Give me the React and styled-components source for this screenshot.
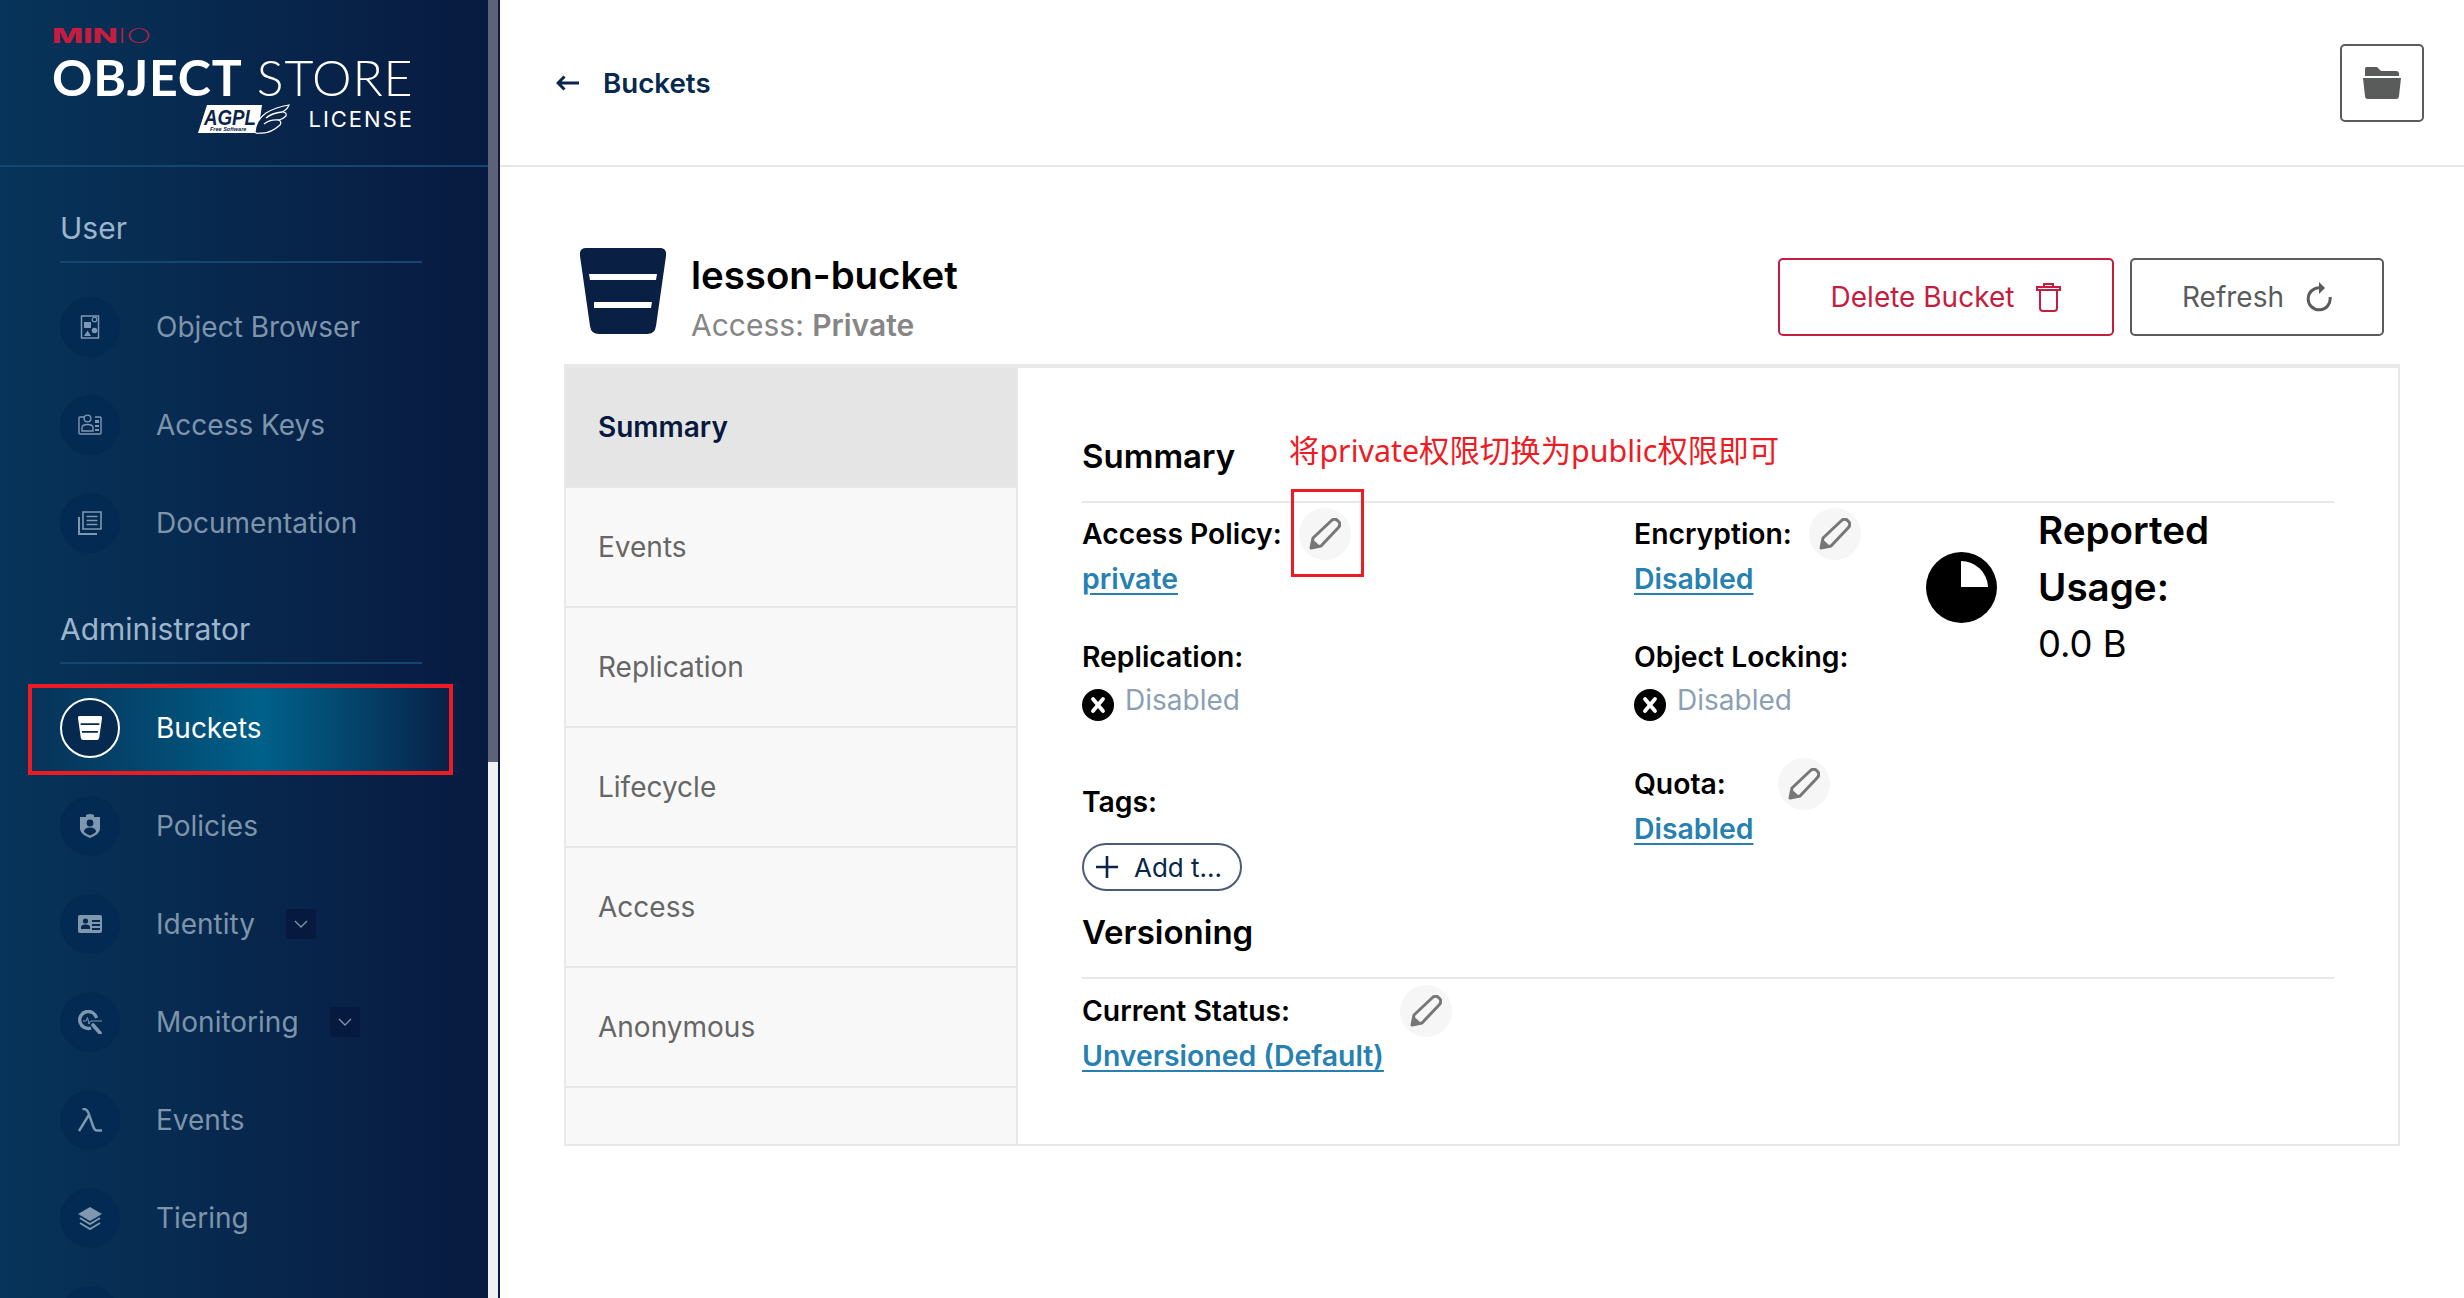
import styled, { createGlobalStyle } from 'styled-components'

const GlobalStyle = createGlobalStyle`
  html, body {
    margin: 0;
    height: 100%;
    overflow: hidden;
    background: #fff;
    font-family: Inter, "Noto Sans", sans-serif;
  }
  * { box-sizing: border-box; }
`

const BucketGlyph = ({ size = 24, color = 'currentColor', stripe = '#fff' }) => (
  <svg width={size} height={size} viewBox="0 0 86 86">
    <path
      d="M6 0H80Q87 0 86 8L76 78Q75 86 67 86H19Q11 86 10 78L0 8Q-1 0 6 0Z"
      fill={color}
    />
    <path d="M9 26H77L76 32H10ZM14 54H72L71 60H14Z" fill={stripe} />
  </svg>
)

const Pencil = () => (
  <svg width="32" height="32" viewBox="0 0 32 32" fill="none">
    <path
      d="M2 30L4 20L22 3Q25 0 28 2L30 4Q32 7 29 10L12 28Z"
      stroke="#777"
      strokeWidth="3"
      strokeLinejoin="round"
    />
    <path d="M2 30L3.5 21L11 28Z" fill="#777" />
  </svg>
)

const XCircle = () => (
  <svg width="32" height="32" viewBox="0 0 32 32">
    <circle cx="16" cy="16" r="16" fill="#000" />
    <path d="M11 10L21 22M21 10L11 22" stroke="#fff" strokeWidth="3.8" strokeLinecap="round" />
  </svg>
)

const UsagePie = () => (
  <svg width="71" height="71" viewBox="0 0 71 71">
    <circle cx="35.5" cy="35.5" r="35.5" fill="#000" />
    <path d="M35 9A27 27 0 0 1 62 35H35Z" fill="#fff" />
  </svg>
)

const icons = {
  browser: (
    <svg viewBox="0 0 24 24" fill="none">
      <path d="M3.5 1H20.5V23H3.5Z" stroke="currentColor" strokeWidth="1.5" />
      <path d="M6 7H13V13H6Z" fill="currentColor" />
      <circle cx="16.5" cy="4.5" r="2.3" stroke="currentColor" strokeWidth="1.2" />
      <circle cx="16.5" cy="15.5" r="2.8" fill="currentColor" />
      <path d="M6 21L9.5 15.5L13 21Z" fill="currentColor" />
    </svg>
  ),
  keys: (
    <svg viewBox="0 0 24 24" fill="none">
      <path d="M6 4H2Q1 4 1 5V20Q1 21 2 21H22Q23 21 23 20V5Q23 4 22 4H17" stroke="currentColor" strokeWidth="1.4" />
      <circle cx="9.5" cy="5.5" r="3.4" stroke="currentColor" strokeWidth="1.4" />
      <path d="M4 18V15Q4 11.5 9.5 11.5Q15 11.5 15 15V18Z" stroke="currentColor" strokeWidth="1.4" />
      <path d="M17 7H21V10H17ZM17 12H21V14H17ZM17 16H21V18H17Z" fill="currentColor" />
    </svg>
  ),
  docs: (
    <svg viewBox="0 0 24 24" fill="none">
      <path d="M5 1H23V18H5Z" stroke="currentColor" strokeWidth="1.6" />
      <path d="M1 6V23H19" stroke="currentColor" strokeWidth="2" />
      <path d="M8.5 5.5H19.5M8.5 9.5H19.5M8.5 13.5H19.5" stroke="currentColor" strokeWidth="1.6" />
    </svg>
  ),
  policies: (
    <svg viewBox="0 0 24 24" fill="none">
      <path
        d="M8 3V1.5Q8 0 12 0Q16 0 16 1.5V3H22V15Q22 20 12 24Q2 20 2 15V3Z"
        fill="currentColor"
      />
      <circle cx="12" cy="9" r="3.4" fill="#06294f" />
      <path d="M6 18Q6 13.5 12 13.5Q18 13.5 18 18Q15 20.5 12 21.5Q9 20.5 6 18Z" fill="#06294f" />
    </svg>
  ),
  identity: (
    <svg viewBox="0 0 24 24">
      <path d="M2 3H22Q24 3 24 5V19Q24 21 22 21H2Q0 21 0 19V5Q0 3 2 3Z" fill="currentColor" />
      <circle cx="7.5" cy="9" r="2.6" fill="#06294f" />
      <path d="M3 17V15Q3 12.5 7.5 12.5Q12 12.5 12 15V17Z" fill="#06294f" />
      <path d="M14 8H22V10H14ZM14 12H22V14H14ZM14 16H22V18H14Z" fill="#06294f" />
    </svg>
  ),
  monitoring: (
    <svg viewBox="0 0 24 24" fill="none">
      <path d="M18.5 8A8.5 8.5 0 1 0 13 18" stroke="currentColor" strokeWidth="3.4" />
      <path d="M15 15L22 23" stroke="currentColor" strokeWidth="3.6" strokeLinecap="round" />
      <path d="M5 11H8L9.5 7.5L11 14L12.5 11H24" stroke="currentColor" strokeWidth="1" />
    </svg>
  ),
  lambda: (
    <svg viewBox="0 0 24 24" fill="none">
      <path d="M1 23L10.5 7.5M4.5 1H6Q9 1 10.5 5L15 18Q16.5 22.5 19 22.5H24" stroke="currentColor" strokeWidth="2.4" />
    </svg>
  ),
  tiering: (
    <svg viewBox="0 0 24 24" fill="none">
      <path d="M12 1L24 8L12 15L0 8Z" fill="currentColor" />
      <path d="M2 12L12 18L22 12M2 17L12 23L22 17" stroke="currentColor" strokeWidth="2" />
    </svg>
  ),
  buckets: <BucketGlyph stripe="#06294f" />,
}

const userLinks = [
  { label: 'Object Browser', icon: 'browser' },
  { label: 'Access Keys', icon: 'keys' },
  { label: 'Documentation', icon: 'docs' },
]

// the last row runs off the bottom of the window, only its circle top shows
const adminLinks = [
  { label: 'Buckets', icon: 'buckets', active: true },
  { label: 'Policies', icon: 'policies' },
  { label: 'Identity', icon: 'identity', expand: true },
  { label: 'Monitoring', icon: 'monitoring', expand: true },
  { label: 'Events', icon: 'lambda' },
  { label: 'Tiering', icon: 'tiering' },
  { label: '', icon: 'tiering' },
]

const tabs = ['Summary', 'Events', 'Replication', 'Lifecycle', 'Access', 'Anonymous']

const NavRow = ({ label, icon, active, expand }) => (
  <NavItem $active={active}>
    <NavIcon $active={active}>{icons[icon]}</NavIcon>
    <NavLabel $active={active}>{label}</NavLabel>
    {expand && (
      <Chevron>
        <svg width="14" height="8" viewBox="0 0 14 8" fill="none">
          <path d="M1 1L7 7L13 1" stroke="currentColor" strokeWidth="1.4" />
        </svg>
      </Chevron>
    )}
  </NavItem>
)

const App = () => {
  return (
    <Page>
      <GlobalStyle />
      <Sidebar>
        <SideNav>
          <Logo>
            <Brand>
              <b>MIN</b>IO
            </Brand>
            <ProductName>
              <b>OBJECT</b> STORE
            </ProductName>
            <LicenseRow>
              <svg width="94" height="30" viewBox="0 0 94 30">
                <path d="M9 1H58L60 29H0Z" fill="#fff" />
                <path d="M58 1H64L60 29H52Z" fill="#fff" />
                <text x="6" y="21" fontFamily="Liberation Sans" fontStyle="italic" fontWeight="700" fontSize="22" textLength="52" lengthAdjust="spacingAndGlyphs" fill="#0a2547">
                  AGPL
                </text>
                <text x="12" y="27" fontFamily="Liberation Sans" fontStyle="italic" fontWeight="700" fontSize="5.5" fill="#0a2547">
                  Free Software
                </text>
                <path d="M57 28Q58 16 68 9Q78 3 91 1Q89 6 84 8Q89 8 88 12Q85 15 81 16Q84 18 82 21Q72 30 62 29Q58 30 57 28Z" fill="#0a2547" stroke="#fff" strokeWidth="1.2" />
                <path d="M68 14Q74 9 84 8M66 20Q72 15 81 16" stroke="#fff" strokeWidth="1.4" fill="none" />
              </svg>
              <License>LICENSE</License>
            </LicenseRow>
          </Logo>
          <SectionTitle $top={41}>User</SectionTitle>
          {userLinks.map((link) => (
            <NavRow key={link.icon} {...link} />
          ))}
          <SectionTitle $top={41}>Administrator</SectionTitle>
          {adminLinks.map((link, index) => (
            <NavRow key={index} {...link} />
          ))}
          <AnnotationBox $left={28} $top={684} $width={425} $height={91} $line={4} />
        </SideNav>
        <ScrollTrack>
          <ScrollThumb />
        </ScrollTrack>
      </Sidebar>

      <Main>
        <TopBar>
          <BackLink>
            <svg width="23" height="16" viewBox="0 0 23 16" fill="none">
              <path d="M23 8H2M8.5 1.5L2 8L8.5 14.5" stroke="#0a2547" strokeWidth="3" />
            </svg>
            Buckets
          </BackLink>
          <FolderButton>
            <svg width="38" height="32" viewBox="0 0 38 32">
              <path d="M3 0H14L18 4H33Q36 4 36 7V9H2V3Q2 0 3 0Z" fill="#5a5b5b" />
              <path d="M0 11H38L36 29Q36 32 33 32H5Q2 32 2 29Z" fill="#5a5b5b" />
            </svg>
          </FolderButton>
        </TopBar>

        <Content>
          <BucketHeader>
            <BucketInfo>
              <BucketGlyph size={86} color="#0a1f44" />
              <div>
                <BucketName>lesson-bucket</BucketName>
                <BucketAccess>
                  Access: <b>Private</b>
                </BucketAccess>
              </div>
            </BucketInfo>
            <Actions>
              <ActionButton $color="#c51d3f" $width={336}>
                Delete Bucket
                <svg width="25" height="30" viewBox="0 0 25 30" fill="none">
                  <path d="M1 5H24V8H1ZM8 5V2H17V5" stroke="#c51d3f" strokeWidth="2" />
                  <path d="M4 8V26Q4 29 7 29H18Q21 29 21 26V8" stroke="#c51d3f" strokeWidth="2" />
                </svg>
              </ActionButton>
              <ActionButton $color="#5a5b5b" $width={254}>
                Refresh
                <svg width="26" height="30" viewBox="0 0 26 30" fill="none">
                  <path d="M15 6A11 11 0 1 0 24 15" stroke="#5a5b5b" strokeWidth="3" />
                  <path d="M13 0L19 6L13 12Z" fill="#5a5b5b" />
                </svg>
              </ActionButton>
            </Actions>
          </BucketHeader>

          <Panel>
            <TabList>
              {tabs.map((tab, index) => (
                <Tab key={tab} $selected={index === 0}>
                  {tab}
                </Tab>
              ))}
            </TabList>
            <TabBody>
              <Annotation>将private权限切换为public权限即可</Annotation>
              <AnnotationBox $left={273} $top={121} $width={73} $height={88} $line={3} />
              <SectionHeading>Summary</SectionHeading>
              <SummaryGrid>
                <Column>
                  <LabelRow $gap={17}>
                    Access Policy:
                    <EditCircle>
                      <Pencil />
                    </EditCircle>
                  </LabelRow>
                  <ValueLink>private</ValueLink>
                  <LabelRow $top={33}>Replication:</LabelRow>
                  <StatusRow>
                    <XCircle />
                    <StatusText>Disabled</StatusText>
                  </StatusRow>
                  <LabelRow $top={59}>Tags:</LabelRow>
                  <AddTag>
                    <svg width="22" height="22" viewBox="0 0 22 22" fill="none">
                      <path d="M11 0V22M0 11H22" stroke="#0a2547" strokeWidth="2.6" />
                    </svg>
                    Add t...
                  </AddTag>
                </Column>
                <Column>
                  <LabelRow $gap={17}>
                    Encryption:
                    <EditCircle>
                      <Pencil />
                    </EditCircle>
                  </LabelRow>
                  <ValueLink>Disabled</ValueLink>
                  <LabelRow $top={33}>Object Locking:</LabelRow>
                  <StatusRow>
                    <XCircle />
                    <StatusText>Disabled</StatusText>
                  </StatusRow>
                  <LabelRow $top={41} $gap={52}>
                    Quota:
                    <EditCircle>
                      <Pencil />
                    </EditCircle>
                  </LabelRow>
                  <ValueLink>Disabled</ValueLink>
                </Column>
                <Usage>
                  <UsagePie />
                  <div>
                    <UsageTitle>Reported Usage:</UsageTitle>
                    <UsageValue>0.0 B</UsageValue>
                  </div>
                </Usage>
              </SummaryGrid>
              <SectionHeading $top={18}>Versioning</SectionHeading>
              <LabelRow $top={9} $gap={110}>
                Current Status:
                <EditCircle>
                  <Pencil />
                </EditCircle>
              </LabelRow>
              <ValueLink>Unversioned (Default)</ValueLink>
            </TabBody>
          </Panel>
        </Content>
      </Main>
    </Page>
  )
}

const Page = styled.div`
  display: flex;
  width: 2464px;
  height: 1298px;
  overflow: hidden;
`

const Sidebar = styled.aside`
  display: flex;
  flex: 0 0 500px;
  height: 100%;
  border-right: 2px solid #081c42;
`

const SideNav = styled.nav`
  position: relative;
  width: 488px;
  height: 100%;
  overflow: hidden;
  background: linear-gradient(90deg, #07345a 0%, #081a40 100%);
`

const ScrollTrack = styled.div`
  width: 10px;
  background: #f1f1f1;
`

const ScrollThumb = styled.div`
  height: 762px;
  background: #5c6278;
`

const Logo = styled.div`
  height: 167px;
  padding: 28px 74px 0 52px;
  border-bottom: 2px solid #15466f;
  color: #fff;
`

const Brand = styled.div`
  width: 88px;
  height: 16px;
  color: #c51d3f;
  font-size: 20px;
  font-weight: 200;
  line-height: 16px;
  white-space: nowrap;
  transform: scaleX(1.65);
  transform-origin: left center;

  b {
    font-weight: 800;
  }
`

const ProductName = styled.div`
  margin-top: 9px;
  font-family: Lato, sans-serif;
  font-size: 50px;
  font-weight: 300;
  letter-spacing: 0.8px;
  line-height: 48px;
  white-space: nowrap;

  b {
    font-weight: 700;
  }
`

const LicenseRow = styled.div`
  display: flex;
  align-items: center;
  justify-content: flex-end;
  gap: 16px;
  margin-top: 3px;
`

const License = styled.span`
  font-size: 22px;
  font-weight: 400;
  letter-spacing: 2px;
`

const SectionTitle = styled.div`
  margin: ${({ $top }) => $top}px 66px 19px 60px;
  padding-bottom: 13px;
  border-bottom: 2px solid #15466f;
  color: #9db5cb;
  font-size: 30px;
  line-height: 40px;
`

const NavItem = styled.div`
  display: flex;
  align-items: center;
  height: 90px;
  margin: 0 23px 8px 28px;
  padding-left: 32px;
  background: ${({ $active }) =>
    $active
      ? 'linear-gradient(90deg, rgba(0, 0, 0, 0) 0%, #00618a 53%, rgba(0, 0, 0, 0) 100%)'
      : 'transparent'};
`

const NavIcon = styled.span`
  display: flex;
  align-items: center;
  justify-content: center;
  flex: 0 0 60px;
  width: 60px;
  height: 60px;
  border: 2px solid ${({ $active }) => ($active ? '#fff' : '#052a50')};
  border-radius: 50%;
  background: ${({ $active }) => ($active ? '#06294f' : '#022a52')};
  color: ${({ $active }) => ($active ? '#fff' : '#8098af')};

  svg {
    width: 24px;
    height: 24px;
  }
`

const NavLabel = styled.span`
  margin-left: 36px;
  color: ${({ $active }) => ($active ? '#fff' : '#7d94ab')};
  font-size: 28px;
  white-space: nowrap;
`

const Chevron = styled.span`
  display: flex;
  align-items: center;
  justify-content: center;
  width: 30px;
  height: 30px;
  margin-left: 31px;
  border-radius: 3px;
  background: #061a40;
  color: #7d94ab;
`

const AnnotationBox = styled.div`
  position: absolute;
  left: ${({ $left }) => $left}px;
  top: ${({ $top }) => $top}px;
  width: ${({ $width }) => $width}px;
  height: ${({ $height }) => $height}px;
  border: ${({ $line }) => $line}px solid #ed1c24;
  pointer-events: none;
`

const Main = styled.main`
  flex: 1;
  min-width: 0;
  background: #fff;
`

const TopBar = styled.header`
  display: flex;
  align-items: center;
  justify-content: space-between;
  height: 167px;
  padding: 0 40px 0 56px;
  border-bottom: 2px solid #e5e5e5;
`

const BackLink = styled.a`
  display: flex;
  align-items: center;
  gap: 24px;
  color: #07284f;
  font-size: 27.7px;
  font-weight: 600;
`

const FolderButton = styled.button`
  display: flex;
  align-items: center;
  justify-content: center;
  width: 84px;
  height: 78px;
  padding: 0;
  border: 2px solid #5a5b5b;
  border-radius: 5px;
  background: #fff;
`

const Content = styled.section`
  padding: 81px 64px 0 64px;
`

const BucketHeader = styled.div`
  display: flex;
  align-items: flex-start;
  justify-content: space-between;
  height: 116px;
  padding: 0 16px;
`

const BucketInfo = styled.div`
  display: flex;
  gap: 25px;
`

const BucketName = styled.div`
  margin-top: 4px;
  color: #000;
  font-size: 38.4px;
  font-weight: 600;
  line-height: 46px;
`

const BucketAccess = styled.div`
  margin-top: 7px;
  color: #868686;
  font-size: 30px;
  line-height: 40px;

  b {
    font-weight: 600;
  }
`

const Actions = styled.div`
  display: flex;
  gap: 16px;
  margin-top: 10px;
`

const ActionButton = styled.button`
  display: flex;
  align-items: center;
  justify-content: center;
  gap: 22px;
  width: ${({ $width }) => $width}px;
  height: 78px;
  padding: 0;
  border: 2px solid ${({ $color }) => $color};
  border-radius: 5px;
  background: #fff;
  color: ${({ $color }) => $color};
  font-family: inherit;
  font-size: 28px;
`

const Panel = styled.div`
  display: flex;
  height: 782px;
  border: 2px solid #e8e8e8;
  border-top-width: 4px;
`

const TabList = styled.div`
  flex: 0 0 452px;
  background: #f8f8f8;
  border-right: 2px solid #e8e8e8;
`

const Tab = styled.div`
  display: flex;
  align-items: center;
  height: 120px;
  padding-left: 32px;
  border-bottom: 2px solid #e8e8e8;
  background: ${({ $selected }) => ($selected ? '#e5e5e5' : 'transparent')};
  color: ${({ $selected }) => ($selected ? '#07193e' : '#666')};
  font-size: 28px;
  font-weight: ${({ $selected }) => ($selected ? 600 : 400)};
`

const TabBody = styled.div`
  position: relative;
  flex: 1;
  padding: 65px 64px 0 64px;
`

const Annotation = styled.span`
  position: absolute;
  left: 271px;
  top: 61px;
  color: #ed1c24;
  font-family: "Noto Sans", "Noto Sans CJK SC", sans-serif;
  font-size: 30.4px;
  line-height: 44px;
  white-space: nowrap;
`

const SectionHeading = styled.h2`
  margin: ${({ $top = 0 }) => $top}px 0 0;
  padding-bottom: 22px;
  border-bottom: 2px solid #e8e8e8;
  color: #000;
  font-size: 33px;
  font-weight: 600;
  line-height: 46px;
`

const SummaryGrid = styled.div`
  display: grid;
  grid-template-columns: 552px 292px 1fr;
  padding-top: 8px;
`

const Column = styled.div`
  display: flex;
  flex-direction: column;
  align-items: flex-start;
`

const LabelRow = styled.div`
  display: flex;
  align-items: center;
  gap: ${({ $gap = 0 }) => $gap}px;
  height: 46px;
  margin-top: ${({ $top = 0 }) => $top}px;
  color: #000;
  font-size: 28.3px;
  font-weight: 600;
`

const EditCircle = styled.span`
  display: flex;
  align-items: center;
  justify-content: center;
  width: 52px;
  height: 52px;
  border-radius: 50%;
  background: #f6f6f6;
`

const ValueLink = styled.a`
  display: block;
  color: #2781b0;
  font-size: 28.4px;
  font-weight: 600;
  line-height: 44px;
  text-decoration: underline;
  text-underline-offset: 4px;
`

const StatusRow = styled.div`
  display: flex;
  align-items: flex-start;
  gap: 11px;
  height: 40px;
  padding-top: 9px;
`

const StatusText = styled.span`
  margin-top: -7px;
  color: #8ba0b4;
  font-size: 28px;
  line-height: 36px;
`

const AddTag = styled.button`
  display: flex;
  align-items: center;
  gap: 16px;
  width: 160px;
  height: 48px;
  margin-top: 18px;
  padding: 0 0 0 12px;
  border: 2px solid #4a5a7a;
  border-radius: 24px;
  background: #fff;
  color: #0a2547;
  font-family: inherit;
  font-size: 26px;
  white-space: nowrap;
`

const Usage = styled.div`
  display: flex;
  align-items: center;
  gap: 41px;
  align-self: start;
  margin-top: -9px;
`

const UsageTitle = styled.div`
  width: 260px;
  color: #000;
  font-size: 38.6px;
  font-weight: 600;
  line-height: 57px;
`

const UsageValue = styled.div`
  color: #000;
  font-size: 36.4px;
  line-height: 57px;
`

export default App
